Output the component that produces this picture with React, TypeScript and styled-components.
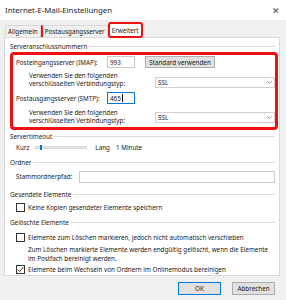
import React from "react";
import styled, { createGlobalStyle } from "styled-components";

const Global = createGlobalStyle`
  html, body { margin: 0; padding: 0; }
  body {
    background: #f0f0f0;
    font-family: "Noto Sans", "Open Sans", sans-serif;
    font-size: 6.3px;
    color: #1a1a1a;
    overflow: hidden;
    white-space: nowrap;
  }
  * { box-sizing: border-box; }
`;

const Window = styled.div`
  width: 286px;
  height: 300px;
  display: flex;
  flex-direction: column;
  background: #f0f0f0;
  overflow: hidden;
`;

const TitleBar = styled.div`
  height: 20px;
  background: #fff;
  display: flex;
  align-items: center;
  justify-content: space-between;
  padding: 0 6px 0 5px;
`;

const Title = styled.span`
  font-size: 7.8px;
  color: #222;
`;

const Close = styled.span`
  font-size: 9px;
  color: #444;
  line-height: 1;
`;

const TabStrip = styled.div`
  display: flex;
  align-items: flex-end;
  height: 17px;
  padding: 0 0 0 5px;
`;

const Tab = styled.div<{ $active?: boolean }>`
  height: ${(p) => (p.$active ? "16px" : "12px")};
  display: flex;
  align-items: center;
  padding: 0 2px;
  background: ${(p) => (p.$active ? "#fff" : "#f0f0f0")};
  border: ${(p) => (p.$active ? "2px solid #ee1111" : "1px solid #d9d9d9")};
  border-bottom: ${(p) => (p.$active ? "2px solid #ee1111" : "none")};
  border-radius: ${(p) => (p.$active ? "3px" : "0")};
  margin-bottom: ${(p) => (p.$active ? "-1px" : "0")};
  position: relative;
  z-index: ${(p) => (p.$active ? 1 : 0)};
  & + & { border-left: ${(p) => (p.$active ? "2px solid #ee1111" : "none")}; }
`;

const Panel = styled.div`
  margin: 0 6px 0 4px;
  height: 239px;
  background: #fff;
  border: 1px solid #d9d9d9;
  padding: 4px 1px 0 5px;
  display: flex;
  flex-direction: column;
  overflow: hidden;
`;

const GroupHeader = styled.div<{ $mt?: number }>`
  display: flex;
  align-items: center;
  height: 10px;
  margin-top: ${(p) => p.$mt ?? 0}px;
  margin-right: 3px;
  gap: 2px;
  &::after {
    content: "";
    flex: 1;
    height: 1px;
    background: #dcdcdc;
  }
`;

const Highlight = styled.div`
  border: 3px solid #ee1111;
  border-radius: 4px;
  padding: 0 0 0 3px;
  display: flex;
  flex-direction: column;
`;

const PortRow = styled.div<{ $h: number }>`
  height: ${(p) => p.$h}px;
  display: flex;
  align-items: center;
`;

const PortLabel = styled.span`
  width: 91px;
`;

const TextBox = styled.div<{ $focus?: boolean; $w?: number }>`
  width: ${(p) => (p.$w ? `${p.$w}px` : "auto")};
  flex: ${(p) => (p.$w ? "none" : "1")};
  height: 12px;
  border: 1px solid ${(p) => (p.$focus ? "#0078d7" : "#c9c9c9")};
  background: #fff;
  display: flex;
  align-items: center;
  padding-left: 2px;
`;

const Caret = styled.span`
  width: 1px;
  height: 8px;
  background: #000;
  margin-left: 1px;
`;

const Button = styled.div<{ $w: number; $h?: number; $default?: boolean }>`
  width: ${(p) => p.$w}px;
  height: ${(p) => p.$h ?? 12}px;
  background: #e1e1e1;
  border: 1px solid ${(p) => (p.$default ? "#0078d7" : "#adadad")};
  display: flex;
  align-items: center;
  justify-content: center;
`;

const EncBlock = styled.div<{ $selTop: number }>`
  height: 20px;
  display: flex;
  align-items: flex-start;
  padding-left: 13px;
  & > :last-child { margin-top: ${(p) => p.$selTop}px; }
`;

const EncText = styled.div`
  width: 126px;
  line-height: 8.5px;
  padding-top: 2px;
`;

const Select = styled.div`
  width: 120px;
  height: 11px;
  border: 1px solid #d0d0d0;
  background: #fff;
  display: flex;
  align-items: center;
  justify-content: space-between;
  padding: 0 1px 0 2px;
`;

const Chevron = styled.span`
  width: 9px;
  height: 8px;
  display: flex;
  align-items: center;
  justify-content: center;
  border-left: 1px solid #f0f0f0;
`;

const Row = styled.div<{ $h: number; $mt?: number }>`
  height: ${(p) => p.$h}px;
  margin-top: ${(p) => p.$mt ?? 0}px;
  display: flex;
  align-items: center;
  padding-left: 6px;
  padding-right: 3px;
`;

const Track = styled.div`
  width: 52px;
  height: 3px;
  margin: 0 8px 0 6px;
  background: #e7eaea;
  border: 1px solid #d6d6d6;
  display: flex;
  align-items: center;
  padding-left: 4px;
`;

const Thumb = styled.span`
  width: 2px;
  height: 5px;
  background: #0078d7;
`;

const Spacer = styled.span<{ $w: number }>`
  display: inline-block;
  width: ${(p) => p.$w}px;
`;

const Box = styled.span`
  width: 9px;
  height: 9px;
  border: 1px solid #333;
  background: #fff;
  margin-right: 3px;
  flex: none;
  display: flex;
  align-items: center;
  justify-content: center;
`;

const Note = styled.div`
  margin-top: 2px;
  padding-left: 18px;
  line-height: 9px;
`;

const Footer = styled.div`
  display: flex;
  justify-content: flex-end;
  gap: 11px;
  padding: 6px 11px 0 0;
`;

const Check = () => (
  <svg width="7" height="7" viewBox="0 0 7 7">
    <path d="M0.8 3.6 L2.7 5.5 L6.3 1" fill="none" stroke="#222" strokeWidth="0.9" />
  </svg>
);

const Down = () => (
  <svg width="5" height="3" viewBox="0 0 5 3">
    <path d="M0.3 0.3 L2.5 2.5 L4.7 0.3" fill="none" stroke="#777" strokeWidth="0.7" />
  </svg>
);

export default function App() {
  return (
    <>
      <Global />
      <Window>
        <TitleBar>
          <Title>Internet-E-Mail-Einstellungen</Title>
          <Close>✕</Close>
        </TitleBar>
        <TabStrip>
          <Tab>Allgemein</Tab>
          <Tab>Postausgangsserver</Tab>
          <Tab $active>Erweitert</Tab>
        </TabStrip>
        <Panel>
          <GroupHeader>Serveranschlussnummern</GroupHeader>
          <Highlight>
            <PortRow $h={15}>
              <PortLabel>Posteingangsserver (IMAP):</PortLabel>
              <TextBox $w={28}>993</TextBox>
              <Spacer $w={10} />
              <Button $w={70}>Standard verwenden</Button>
            </PortRow>
            <EncBlock $selTop={7}>
              <EncText>
                Verwenden Sie den folgenden
                <br />
                verschlüsselten Verbindungstyp:
              </EncText>
              <Select>
                SSL
                <Chevron>
                  <Down />
                </Chevron>
              </Select>
            </EncBlock>
            <PortRow $h={17}>
              <PortLabel>Postausgangsserver (SMTP):</PortLabel>
              <TextBox $w={28} $focus>
                465
                <Caret />
              </TextBox>
            </PortRow>
            <EncBlock $selTop={5}>
              <EncText>
                Verwenden Sie den folgenden
                <br />
                verschlüsselten Verbindungstyp:
              </EncText>
              <Select>
                SSL
                <Chevron>
                  <Down />
                </Chevron>
              </Select>
            </EncBlock>
          </Highlight>
          <GroupHeader $mt={2}>Servertimeout</GroupHeader>
          <Row $h={12}>
            Kurz
            <Track>
              <Thumb />
            </Track>
            Lang
            <Spacer $w={6} />1 Minute
          </Row>
          <GroupHeader $mt={4}>Ordner</GroupHeader>
          <Row $h={14} $mt={2}>
            Stammordnerpfad:
            <Spacer $w={7} />
            <TextBox />
          </Row>
          <GroupHeader $mt={6}>Gesendete Elemente</GroupHeader>
          <Row $h={12} $mt={2}>
            <Box />
            Keine Kopien gesendeter Elemente speichern
          </Row>
          <GroupHeader $mt={4}>Gelöschte Elemente</GroupHeader>
          <Row $h={12} $mt={4}>
            <Box />
            Elemente zum Löschen markieren, jedoch nicht automatisch verschieben
          </Row>
          <Note>
            Zum Löschen markierte Elemente werden endgültig gelöscht, wenn die Elemente
            <br />
            im Postfach bereinigt werden.
          </Note>
          <Row $h={12}>
            <Box>
              <Check />
            </Box>
            Elemente beim Wechseln von Ordnern im Onlinemodus bereinigen
          </Row>
        </Panel>
        <Footer>
          <Button $w={43} $h={13} $default>
            OK
          </Button>
          <Button $w={43} $h={13}>
            Abbrechen
          </Button>
        </Footer>
      </Window>
    </>
  );
}
